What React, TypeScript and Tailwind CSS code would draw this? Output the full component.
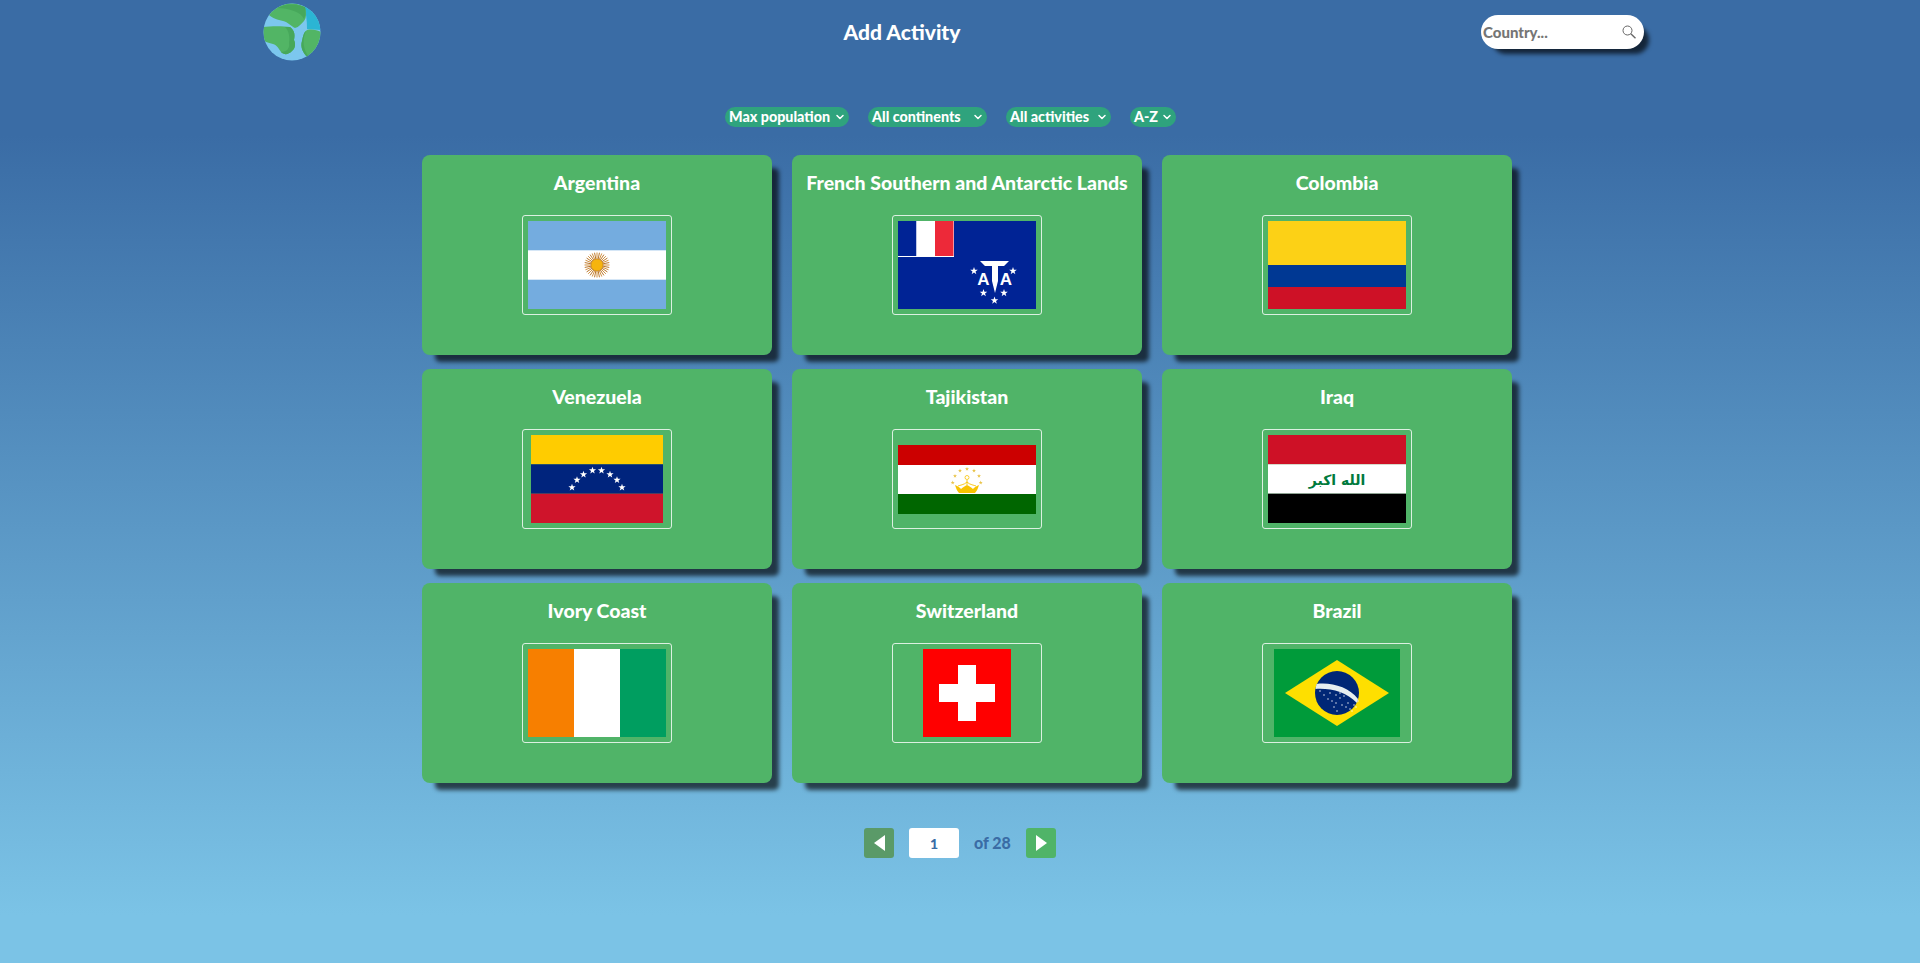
import type { ReactNode } from 'react';
import { ChevronDown } from 'lucide-react';

function starPoints(cx: number, cy: number, r: number) {
  const pts: string[] = [];
  for (let i = 0; i < 10; i++) {
    const a = -Math.PI / 2 + (i * Math.PI) / 5;
    const rad = i % 2 === 0 ? r : r * 0.4;
    pts.push(`${cx + rad * Math.cos(a)},${cy + rad * Math.sin(a)}`);
  }
  return pts.join(' ');
}

const Argentina = () => (
  <svg width="138" height="88" viewBox="0 0 138 88">
    <rect width="138" height="88" fill="#74acdf" />
    <rect y="29.3" width="138" height="29.4" fill="#fff" />
    {Array.from({ length: 32 }).map((_, i) => {
      const a = (i * Math.PI) / 16;
      return (
        <line
          key={i}
          x1={69 + 5 * Math.cos(a)}
          y1={44 + 5 * Math.sin(a)}
          x2={69 + 12.5 * Math.cos(a)}
          y2={44 + 12.5 * Math.sin(a)}
          stroke={i % 2 ? '#b9772f' : '#d2913f'}
          strokeWidth="1"
        />
      );
    })}
    <circle cx="69" cy="44" r="6" fill="#f6b40e" stroke="#b9771f" strokeWidth="0.5" />
  </svg>
);

const Taaf = () => (
  <svg width="138" height="88" viewBox="0 0 138 88">
    <rect width="138" height="88" fill="#002395" />
    <rect width="56" height="36" fill="#fff" />
    <rect width="18.5" height="35" fill="#002395" />
    <rect x="18.5" width="18.5" height="35" fill="#fff" />
    <rect x="37" width="18.5" height="35" fill="#ed2939" />
    <polygon points="82,40 111,40 106,45 100,45 100,60 97,72 94,60 94,45 87,45" fill="#fff" />
    <text x="85.5" y="64" textAnchor="middle" fontSize="17" fontWeight="700" fontFamily="Liberation Sans, sans-serif" fill="#fff">A</text>
    <text x="108" y="64" textAnchor="middle" fontSize="17" fontWeight="700" fontFamily="Liberation Sans, sans-serif" fill="#fff">A</text>
    <polygon points={starPoints(76, 50, 4)} fill="#fff" />
    <polygon points={starPoints(115, 50, 4)} fill="#fff" />
    <polygon points={starPoints(85.5, 72, 4)} fill="#fff" />
    <polygon points={starPoints(106, 72, 4)} fill="#fff" />
    <polygon points={starPoints(96.5, 79.5, 4)} fill="#fff" />
  </svg>
);

const Colombia = () => (
  <svg width="138" height="88" viewBox="0 0 138 88">
    <rect width="138" height="44" fill="#fcd116" />
    <rect y="44" width="138" height="22" fill="#003893" />
    <rect y="66" width="138" height="22" fill="#ce1126" />
  </svg>
);

const Venezuela = () => {
  const stars: [number, number][] = [
    [41, 52.5], [46, 45], [52.5, 39.5], [61.5, 35.5], [70.5, 35.5], [79, 39.5], [86, 45], [91, 52.5],
  ];
  return (
    <svg width="132" height="88" viewBox="0 0 132 88">
      <rect width="132" height="29.3" fill="#ffcc00" />
      <rect y="29.3" width="132" height="29.4" fill="#00247d" />
      <rect y="58.7" width="132" height="29.3" fill="#cf142b" />
      {stars.map(([x, y], i) => (
        <polygon key={i} points={starPoints(x, y, 3.8)} fill="#fff" />
      ))}
    </svg>
  );
};

const Tajikistan = () => (
  <svg width="138" height="69" viewBox="0 0 138 69">
    <rect width="138" height="20" fill="#cc0000" />
    <rect y="20" width="138" height="29" fill="#fff" />
    <rect y="49" width="138" height="20" fill="#006600" />
    {[[54.7, 37.7], [57, 31], [62, 25.7], [69, 24], [76, 25.7], [81, 31], [82.7, 37.7]].map(([x, y], i) => (
      <polygon key={i} points={starPoints(x, y, 2.1)} fill="#e9c44a" />
    ))}
    <circle cx="69" cy="32.5" r="2" fill="none" stroke="#f8c300" strokeWidth="0.8" />
    <path d="M69 35 L69 40 M69 37 C66 40 62 40 60 41 M69 37 C72 40 76 40 78 41" fill="none" stroke="#f8c300" strokeWidth="0.9" />
    <path d="M57 40 C60 41 62 43 63 44 C65 42 67 41 69 40 C71 41 73 42 75 44 C76 43 78 41 81 40 C80 43 79 46 77 48 L61 48 C59 46 58 43 57 40Z" fill="#f8c300" />
  </svg>
);

const Iraq = () => (
  <svg width="138" height="88" viewBox="0 0 138 88">
    <rect width="138" height="29.3" fill="#ce1126" />
    <rect y="29.3" width="138" height="29.4" fill="#fff" />
    <rect y="58.7" width="138" height="29.3" fill="#000" />
    <text
      x="69"
      y="50"
      textAnchor="middle"
      direction="rtl"
      fontSize="14"
      fontWeight="700"
      fontFamily="DejaVu Sans, sans-serif"
      fill="#007a3d"
    >
      الله اكبر
    </text>
  </svg>
);

const IvoryCoast = () => (
  <svg width="138" height="88" viewBox="0 0 138 88">
    <rect width="46" height="88" fill="#f77f00" />
    <rect x="46" width="46" height="88" fill="#fff" />
    <rect x="92" width="46" height="88" fill="#009e60" />
  </svg>
);

const Switzerland = () => (
  <svg width="88" height="88" viewBox="0 0 88 88">
    <rect width="88" height="88" fill="#ff0000" />
    <rect x="35" y="16" width="18" height="56" fill="#fff" />
    <rect x="16" y="35" width="56" height="18" fill="#fff" />
  </svg>
);

const Brazil = () => {
  const dots = [
    [46, 42], [50, 46], [54, 50], [58, 52], [62, 46], [62, 54], [66, 49], [70, 47], [72, 58], [76, 60],
    [80, 56], [84, 52], [78, 62], [63, 62], [56, 44], [68, 56], [74, 54], [82, 58], [66, 44], [60, 58],
  ];
  return (
    <svg width="126" height="88" viewBox="0 0 126 88">
      <rect width="126" height="88" fill="#009b3a" />
      <polygon points="11,44 63,11 115,44 63,77" fill="#fedf00" />
      <circle cx="63" cy="44" r="22" fill="#002776" />
      <path d="M42.5 35 C57 33 75 38 84 50 L83 54 C72 43 57 39 41.5 40 Z" fill="#e6eef0" />
      {dots.map(([x, y], i) => (
        <circle key={i} cx={x} cy={y} r="0.7" fill="#fff" />
      ))}
    </svg>
  );
};

const Globe = () => (
  <svg width="58" height="58" viewBox="0 0 58 58" className="block">
    <defs>
      <clipPath id="globe">
        <circle cx="29" cy="29" r="28.5" />
      </clipPath>
    </defs>
    <g clipPath="url(#globe)">
      <rect width="58" height="58" fill="#7cc7ee" />
      <path d="M41 2 L58 8 L58 27 L44 26 C44 17 43 10 41 2Z" fill="#2bb5d4" />
      <path d="M6 12 C8 3 24 -5 42 4 C43 9 44 14 41 18 C38 21 36 24 32 25 C28 23 25 19 20 18 C15 17 9 15 6 12Z" fill="#52b565" />
      <path d="M14 5 C24 0 34 1 42 4 C43 8 43 12 41 16 C38 9 26 5 14 5Z" fill="#47a85b" />
      <path d="M0 24 C8 23 20 23 27 24 C32 28 32 32 31 37 C33 41 32 46 29 48 C25 52 21 52 18 49 C16 46 14 42 10 41 C6 40 3 39 1 38 C-1 33 -1 29 0 24Z" fill="#52b565" />
      <path d="M22 24 L27 24 C32 28 32 32 31 37 C33 41 32 46 29 48 C25 52 21 52 18 49 C24 49 27 45 26 40 C27 34 26 28 22 24Z" fill="#47a85b" />
      <path d="M44 27 C49 26 54 27 58 29 L58 40 C55 47 50 52 45 55 C40 50 37 44 39 38 C40 33 41 29 44 27Z" fill="#52b565" />
      <path d="M43 28 C39 36 40 47 46 54 L45 55 C40 50 37 44 39 38 C40 33 41 29 43 28Z" fill="#47a85b" />
    </g>
  </svg>
);

function Filter({ label, width }: { label: string; width: string }) {
  return (
    <div className={`flex h-5 items-center justify-between rounded-full bg-[#2fa37d] pb-px pl-1 pr-[3px] text-[14.3px] font-black text-white ${width}`}>
      <span className="whitespace-nowrap">{label}</span>
      <ChevronDown className="shrink-0" size={12} strokeWidth={3} />
    </div>
  );
}

function Card({ name, flag }: { name: string; flag: ReactNode }) {
  return (
    <div className="flex h-[200px] w-[350px] flex-col items-center rounded-lg bg-[#50b468] pt-4 shadow-[10px_10px_4px_-3px_rgba(0,0,0,0.65)]">
      <h2 className="h-6 whitespace-nowrap text-[19.5px] font-black leading-6 text-white">{name}</h2>
      <div className="mt-5 flex h-[100px] w-[150px] items-center justify-center rounded-[3px] border border-white/80 p-[5px]">
        {flag}
      </div>
    </div>
  );
}

const countries: { name: string; flag: ReactNode }[] = [
  { name: 'Argentina', flag: <Argentina /> },
  { name: 'French Southern and Antarctic Lands', flag: <Taaf /> },
  { name: 'Colombia', flag: <Colombia /> },
  { name: 'Venezuela', flag: <Venezuela /> },
  { name: 'Tajikistan', flag: <Tajikistan /> },
  { name: 'Iraq', flag: <Iraq /> },
  { name: 'Ivory Coast', flag: <IvoryCoast /> },
  { name: 'Switzerland', flag: <Switzerland /> },
  { name: 'Brazil', flag: <Brazil /> },
];

export default function App() {
  return (
    <div className="min-h-screen bg-[linear-gradient(#3a6ca5_14%,#7bc3e6_95%)] [font-family:Lato,sans-serif]">
      <header className="flex items-start pl-[263px] pt-[3px]">
        <Globe />
        <h1 className="ml-[522px] mt-[15px] w-[118px] whitespace-nowrap text-center text-[21px] font-black leading-7 text-white">
          Add Activity
        </h1>
        <div className="ml-[520px] mt-3 flex h-[34px] w-[163px] items-center justify-between rounded-full bg-white pl-0.5 pr-2 shadow-[8px_8px_4px_-3px_rgba(0,0,0,0.65)]">
          <span className="text-[15px] font-black text-[#757575]">Country...</span>
          <svg width="14" height="14" viewBox="0 0 14 14" fill="none" stroke="#666" strokeWidth="1">
            <circle cx="5.5" cy="5.5" r="4.5" />
            <path d="M8.8 8.8 L13.5 13.2" strokeWidth="1.4" />
          </svg>
        </div>
      </header>

      <div className="mt-[46px] flex gap-[19px] pl-[725px]">
        <Filter label="Max population" width="w-[124px]" />
        <Filter label="All continents" width="w-[119px]" />
        <Filter label="All activities" width="w-[105px]" />
        <Filter label="A-Z" width="w-[46px]" />
      </div>

      <main className="mt-7 grid w-max grid-cols-[350px_350px_350px] gap-x-5 gap-y-3.5 pl-[422px]">
        {countries.map((c) => (
          <Card key={c.name} name={c.name} flag={c.flag} />
        ))}
      </main>

      <nav className="mt-[45px] flex items-center pl-[864px]">
        <button className="flex h-[30px] w-[30px] items-center justify-center rounded-[3px] bg-[#5a9a68]">
          <span className="h-0 w-0 border-y-[8px] border-r-[11px] border-y-transparent border-r-white" />
        </button>
        <div className="ml-[15px] flex h-[30px] w-[50px] items-center justify-center rounded-[3px] bg-white text-[14px] font-black text-[#3a6ca5]">
          1
        </div>
        <span className="ml-[15px] w-[37px] whitespace-nowrap text-[16px] font-black text-[#3a6ca5]">of 28</span>
        <button className="ml-[15px] flex h-[30px] w-[30px] items-center justify-center rounded-[3px] bg-[#50b468]">
          <span className="h-0 w-0 border-y-[8px] border-l-[11px] border-y-transparent border-l-white" />
        </button>
      </nav>
    </div>
  );
}
